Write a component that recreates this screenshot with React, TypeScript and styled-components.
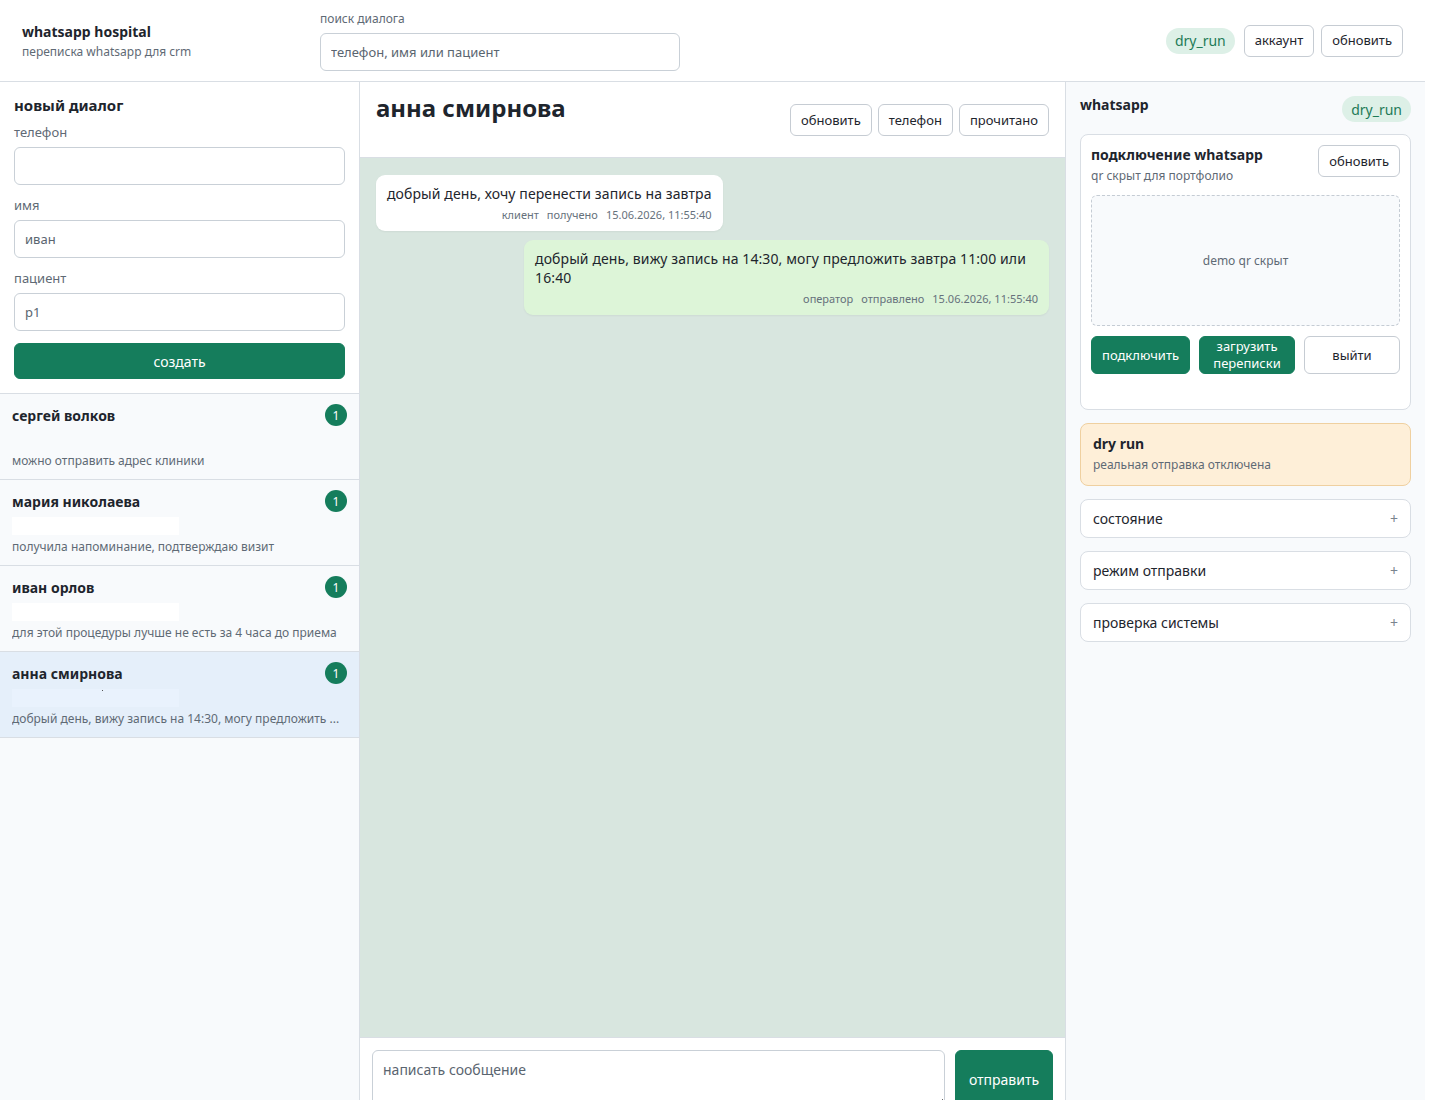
import { FC } from 'react'
import styled, { createGlobalStyle } from 'styled-components'

const GlobalStyle = createGlobalStyle`
    * { box-sizing: border-box; }
    body {
        margin: 0;
        font-family: "Noto Sans", "Open Sans", sans-serif;
        color: #1e252d;
        background: #ffffff;
    }
    button, input, textarea { font-family: inherit; }
`

const green = '#157d5c'
const muted = '#5f6a75'
const line = '#d9dee4'

// the reference was shot with a 15px page scrollbar on the right
const Page = styled.div`
    width: calc(100% - 15px);
`
const Header = styled.header`
    height: 82px;
    display: flex;
    align-items: center;
    padding: 0 22px;
    border-bottom: 1px solid ${line};
    background: #fff;
`
const Brand = styled.div`
    width: 298px;
    display: flex;
    flex-direction: column;
    gap: 2px;
    margin-top: 2px;
`
const BrandTitle = styled.div`
    font-size: 14px;
    font-weight: 700;
    line-height: 18px;
`
const Muted = styled.div<{ $size?: number }>`
    font-size: ${p => p.$size ?? 12}px;
    line-height: 18px;
    color: ${muted};
`
const SearchBlock = styled.div`
    display: flex;
    flex-direction: column;
    gap: 5px;
`
const Input = styled.input<{ $w?: string }>`
    width: ${p => p.$w ?? '100%'};
    height: 38px;
    border: 1px solid #c9d0d7;
    border-radius: 6px;
    padding: 0 10px;
    font-size: 13px;
    color: #5a6570;
    background: #fff;
    &::placeholder { color: #5a6570; }
`
const HeaderRight = styled.div`
    margin-left: auto;
    display: flex;
    align-items: center;
    gap: 7px;
`
const Pill = styled.span`
    display: inline-flex;
    align-items: center;
    height: 26px;
    padding: 0 9px;
    border-radius: 13px;
    background: #ddf0e7;
    color: #1d7b57;
    font-size: 14px;
    margin-right: 2px;
`
const Button = styled.button<{ $primary?: boolean; $h?: number }>`
    height: ${p => p.$h ?? 32}px;
    padding: 0 10px;
    border-radius: 6px;
    font-size: 13px;
    line-height: 17px;
    cursor: pointer;
    border: 1px solid ${p => (p.$primary ? green : '#c6ccd3')};
    background: ${p => (p.$primary ? green : '#fff')};
    color: ${p => (p.$primary ? '#fff' : '#1e252d')};
`

const Main = styled.div`
    display: grid;
    grid-template-columns: 360px 1fr 360px;
`

const Sidebar = styled.aside`
    background: #f8fafc;
    border-right: 1px solid ${line};
`
const NewDialog = styled.form`
    background: #fff;
    padding: 14px;
    display: flex;
    flex-direction: column;
    border-bottom: 1px solid ${line};
`
const SectionTitle = styled.div<{ $size?: number }>`
    font-size: ${p => p.$size ?? 15}px;
    font-weight: 700;
    line-height: 18px;
`
const Label = styled.label`
    font-size: 13px;
    line-height: 18px;
    color: ${muted};
    margin: 9px 0 6px;
`
const FieldGap = styled.div`
    height: 2px;
`
const CreateButton = styled(Button)`
    margin-top: 12px;
    height: 36px;
    font-size: 14px;
    width: 100%;
`

const DialogItem = styled.div<{ $active?: boolean }>`
    height: 86px;
    padding: 10px 12px 0;
    border-bottom: 1px solid ${line};
    background: ${p => (p.$active ? '#e5effa' : '#f8fafc')};
    display: flex;
    flex-direction: column;
`
const ItemTop = styled.div`
    display: flex;
    align-items: center;
    justify-content: space-between;
    height: 22px;
`
const ItemName = styled.div`
    font-size: 14px;
    font-weight: 700;
`
const Badge = styled.span`
    width: 22px;
    height: 22px;
    border-radius: 50%;
    background: ${green};
    color: #fff;
    font-size: 12px;
    display: inline-flex;
    align-items: center;
    justify-content: center;
`
const PhoneMask = styled.div<{ $tone: 'white' | 'none' | 'blue' }>`
    width: 167px;
    height: 18px;
    margin-top: 5px;
    position: relative;
    background: ${p => (p.$tone === 'white' ? '#ffffff' : p.$tone === 'blue' ? '#e9f2fd' : 'transparent')};
`
const MaskDot = styled.span`
    position: absolute;
    left: 90px;
    top: 1px;
    width: 1px;
    height: 1px;
    background: #555;
`
const Preview = styled.div`
    margin-top: 3px;
    font-size: 12px;
    line-height: 18px;
    color: ${muted};
    white-space: nowrap;
    overflow: hidden;
    text-overflow: ellipsis;
`

const Chat = styled.section`
    display: flex;
    flex-direction: column;
    min-width: 0;
`
const ChatHeader = styled.div`
    display: flex;
    justify-content: space-between;
    align-items: flex-start;
    padding: 10px 16px 21px;
    border-bottom: 1px solid ${line};
    background: #fff;
`
const ChatTitle = styled.h1`
    margin: 0;
    font-size: 24px;
    line-height: 32px;
    font-weight: 700;
`
const ButtonRow = styled.div`
    display: flex;
    gap: 6px;
    margin-top: 12px;
`
const Messages = styled.div`
    min-height: 879px;
    background: #d8e6df;
    padding: 17px 16px;
    display: flex;
    flex-direction: column;
    gap: 9px;
`
const Bubble = styled.div<{ $out?: boolean }>`
    align-self: ${p => (p.$out ? 'flex-end' : 'flex-start')};
    max-width: 78%;
    background: ${p => (p.$out ? '#ddf5d8' : '#ffffff')};
    border-radius: 9px;
    padding: 9px 11px;
    box-shadow: 0 1px 2px rgba(0, 0, 0, 0.05);
`
const BubbleText = styled.div`
    font-size: 14px;
    line-height: 19px;
    letter-spacing: 0.1px;
`
const Meta = styled.div`
    display: flex;
    justify-content: flex-end;
    gap: 8px;
    margin-top: 5px;
    font-size: 11px;
    line-height: 14px;
    color: #66717c;
`
const Composer = styled.div`
    display: flex;
    gap: 10px;
    padding: 12px;
    border-top: 1px solid ${line};
    background: #fff;
`
const TextArea = styled.textarea`
    flex: 1;
    height: 58px;
    border: 1px solid #c9d0d7;
    border-radius: 6px;
    padding: 9px 10px;
    font-size: 14px;
    resize: vertical;
    &::placeholder { color: #5a6570; }
`
const SendButton = styled(Button)`
    width: 98px;
    height: 58px;
    font-size: 14px;
`

const Panel = styled.aside`
    background: #f8fafc;
    border-left: 1px solid ${line};
    padding: 14px;
    display: flex;
    flex-direction: column;
    gap: 13px;
`
const PanelHead = styled.div`
    display: flex;
    justify-content: space-between;
    align-items: flex-start;
    height: 26px;
    margin-bottom: -1px;
`
const PanelPill = styled(Pill)`
    margin: 0;
`
const Card = styled.div`
    background: #fff;
    border: 1px solid ${line};
    border-radius: 8px;
    padding: 10px 10px 35px;
    display: flex;
    flex-direction: column;
    gap: 10px;
`
const CardHead = styled.div`
    display: flex;
    justify-content: space-between;
    align-items: flex-start;
`
const CardTitleWrap = styled.div`
    display: flex;
    flex-direction: column;
    gap: 3px;
    padding-top: 1px;
`
const QrBox = styled.div`
    height: 131px;
    border: 1px dashed #c5ccd4;
    border-radius: 6px;
    background: #f8fafc;
    display: flex;
    align-items: center;
    justify-content: center;
    font-size: 12px;
    color: ${muted};
`
const ActionGrid = styled.div`
    display: grid;
    grid-template-columns: repeat(3, 1fr);
    gap: 9px;
`
const Warning = styled.div`
    background: #feefd8;
    border: 1px solid #efd0a0;
    border-radius: 8px;
    padding: 11px 12px;
    display: flex;
    flex-direction: column;
    gap: 3px;
`
const Accordion = styled.div`
    height: 39px;
    background: #fff;
    border: 1px solid ${line};
    border-radius: 8px;
    padding: 0 12px;
    display: flex;
    align-items: center;
    justify-content: space-between;
    font-size: 14px;
`
const Plus = styled.span`
    color: #7a848e;
    font-size: 14px;
`

const dialogs = [
    { name: 'сергей волков', preview: 'можно отправить адрес клиники', mask: 'none' as const },
    { name: 'мария николаева', preview: 'получила напоминание, подтверждаю визит', mask: 'white' as const },
    { name: 'иван орлов', preview: 'для этой процедуры лучше не есть за 4 часа до приема', mask: 'white' as const },
    { name: 'анна смирнова', preview: 'добрый день, вижу запись на 14:30, могу предложить ...', mask: 'blue' as const, active: true },
]

const messages = [
    { text: 'добрый день, хочу перенести запись на завтра', who: 'клиент', status: 'получено', out: false },
    { text: 'добрый день, вижу запись на 14:30, могу предложить завтра 11:00 или 16:40', who: 'оператор', status: 'отправлено', out: true },
]

const App: FC = () => {
    return (
        <Page>
            <GlobalStyle />
            <Header>
                <Brand>
                    <BrandTitle>whatsapp hospital</BrandTitle>
                    <Muted>переписка whatsapp для crm</Muted>
                </Brand>
                <SearchBlock>
                    <Muted>поиск диалога</Muted>
                    <Input $w="360px" placeholder="телефон, имя или пациент" />
                </SearchBlock>
                <HeaderRight>
                    <Pill>dry_run</Pill>
                    <Button>аккаунт</Button>
                    <Button>обновить</Button>
                </HeaderRight>
            </Header>
            <Main>
                <Sidebar>
                    <NewDialog onSubmit={e => e.preventDefault()}>
                        <SectionTitle>новый диалог</SectionTitle>
                        <Label>телефон</Label>
                        <Input />
                        <FieldGap />
                        <Label>имя</Label>
                        <Input defaultValue="иван" />
                        <FieldGap />
                        <Label>пациент</Label>
                        <Input defaultValue="p1" />
                        <CreateButton $primary>создать</CreateButton>
                    </NewDialog>
                    {dialogs.map(d => (
                        <DialogItem key={d.name} $active={d.active}>
                            <ItemTop>
                                <ItemName>{d.name}</ItemName>
                                <Badge>1</Badge>
                            </ItemTop>
                            <PhoneMask $tone={d.mask}>{d.mask === 'blue' && <MaskDot />}</PhoneMask>
                            <Preview>{d.preview}</Preview>
                        </DialogItem>
                    ))}
                </Sidebar>
                <Chat>
                    <ChatHeader>
                        <ChatTitle>анна смирнова</ChatTitle>
                        <ButtonRow>
                            <Button>обновить</Button>
                            <Button>телефон</Button>
                            <Button>прочитано</Button>
                        </ButtonRow>
                    </ChatHeader>
                    <Messages>
                        {messages.map(m => (
                            <Bubble key={m.text} $out={m.out}>
                                <BubbleText>{m.text}</BubbleText>
                                <Meta>
                                    <span>{m.who}</span>
                                    <span>{m.status}</span>
                                    <span>15.06.2026, 11:55:40</span>
                                </Meta>
                            </Bubble>
                        ))}
                    </Messages>
                    <Composer>
                        <TextArea placeholder="написать сообщение" />
                        <SendButton $primary>отправить</SendButton>
                    </Composer>
                </Chat>
                <Panel>
                    <PanelHead>
                        <SectionTitle $size={14}>whatsapp</SectionTitle>
                        <PanelPill>dry_run</PanelPill>
                    </PanelHead>
                    <Card>
                        <CardHead>
                            <CardTitleWrap>
                                <SectionTitle $size={14}>подключение whatsapp</SectionTitle>
                                <Muted>qr скрыт для портфолио</Muted>
                            </CardTitleWrap>
                            <Button>обновить</Button>
                        </CardHead>
                        <QrBox>demo qr скрыт</QrBox>
                        <ActionGrid>
                            <Button $primary $h={38}>подключить</Button>
                            <Button $primary $h={38}>загрузить переписки</Button>
                            <Button $h={38}>выйти</Button>
                        </ActionGrid>
                    </Card>
                    <Warning>
                        <SectionTitle $size={14}>dry run</SectionTitle>
                        <Muted>реальная отправка отключена</Muted>
                    </Warning>
                    {['состояние', 'режим отправки', 'проверка системы'].map(t => (
                        <Accordion key={t}>
                            <span>{t}</span>
                            <Plus>+</Plus>
                        </Accordion>
                    ))}
                </Panel>
            </Main>
        </Page>
    )
}

export default App
